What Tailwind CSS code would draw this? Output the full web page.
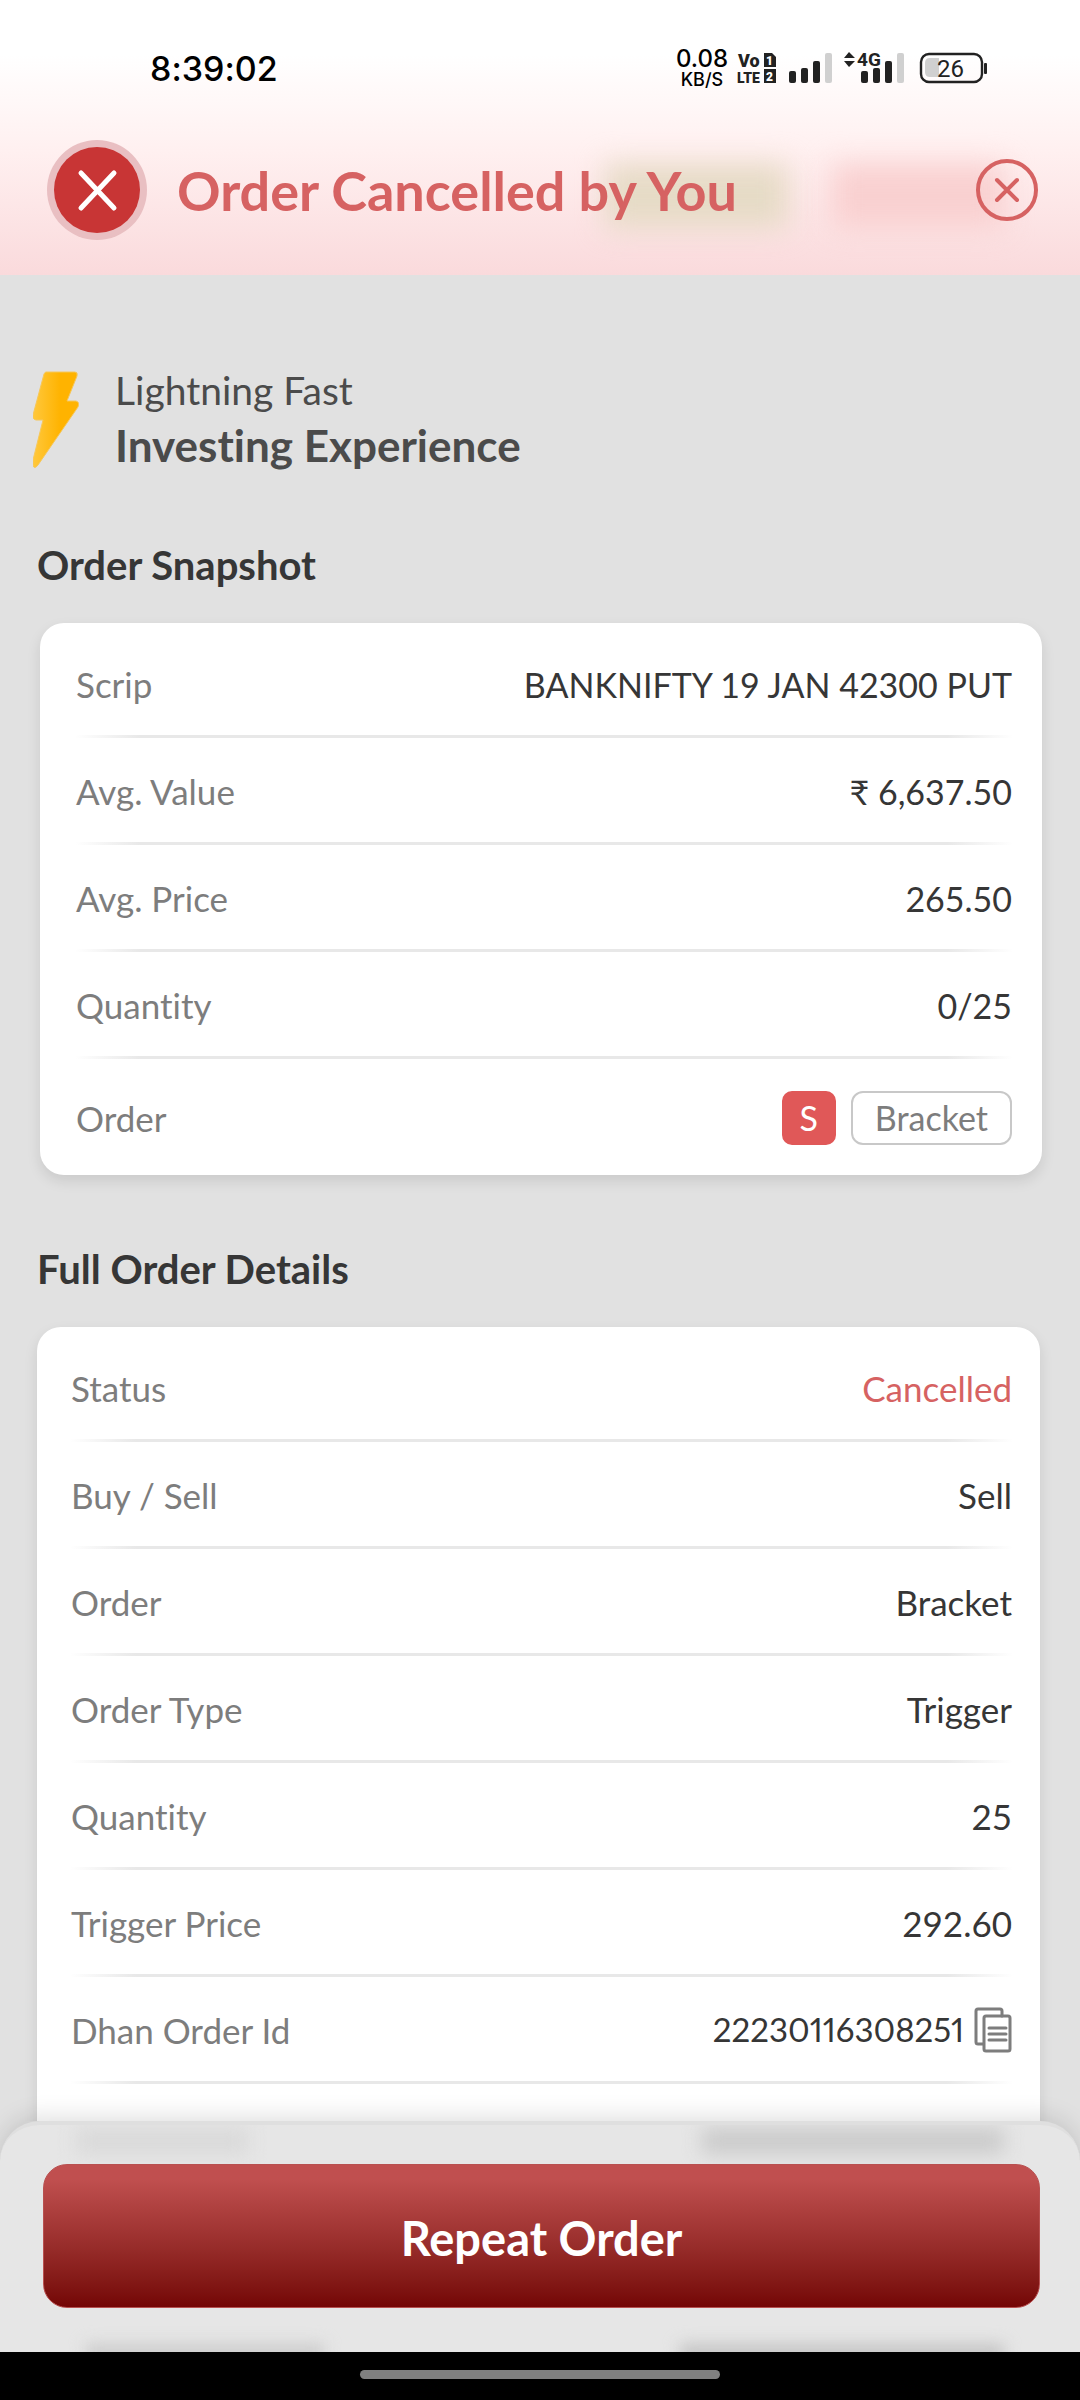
<!DOCTYPE html>
<html lang="en">
<head>
  <meta charset="UTF-8" />
  <meta name="viewport" content="width=device-width, initial-scale=1.0" />
  <title>Order Cancelled</title>
  <script src="https://cdn.jsdelivr.net/npm/@tailwindcss/browser@4"></script>
  <style>
    body {
      font-variant-ligatures: none;
    }
    .rows > div {
      border-bottom: 3px solid;
      border-image: linear-gradient(to right, #fff, #e8e8e8 7%, #e8e8e8 93%, #fff) 1;
    }
    .rows > div:last-child {
      border: 0;
    }
  </style>
</head>
<body class="flex h-screen flex-col overflow-hidden bg-[#e1e1e1] font-['Lato',sans-serif] text-[#363636]">
  <!-- Header -->
  <header class="relative h-[275px] shrink-0 overflow-hidden bg-linear-to-b from-white from-20% via-[#fff0f0] via-55% to-[#fadadc]">
    <div class="absolute top-[164px] left-[56%] h-[64px] w-[17%] bg-[#e6dbc6] blur-[14px]"></div>
    <div class="absolute top-[164px] left-[77%] h-[64px] w-[16%] bg-[#f9d0d0] blur-[14px]"></div>

    <!-- Status bar -->
    <div class="relative flex h-[136px] items-center justify-between pr-[92px] pl-[150px] font-['Inter',sans-serif] text-black">
      <span class="text-[34px] font-medium">8:39:02</span>
      <div class="flex items-center">
        <div class="mr-2 text-center leading-none font-medium">
          <div class="text-[24px]">0.08</div>
          <div class="text-[18px]">KB/S</div>
        </div>
        <svg class="h-10 w-[252px]" viewBox="736 48 252 40" fill="#222" font-family="Roboto, sans-serif" font-weight="900">
          <text x="738" y="67" font-size="18">Vo</text>
          <text x="737" y="83" font-size="14">LTE</text>
          <path d="M764 53h8l4 4v10h-12zM764 69h12v14h-12z" />
          <text x="766" y="65" font-size="12" fill="#fff">1</text>
          <text x="766" y="81" font-size="12" fill="#fff">2</text>
          <rect x="789" y="71" width="7" height="12" rx="2" />
          <rect x="801" y="68" width="7" height="15" rx="2" />
          <rect x="813" y="61" width="7" height="22" rx="2" />
          <rect x="825" y="53" width="7" height="30" rx="2" fill="#d0d0d0" />
          <path d="M844 58l5-6 6 6zM844 61h11l-6 6z" />
          <text x="857" y="66" font-size="19" font-weight="700">4G</text>
          <rect x="861" y="71" width="7" height="12" rx="2" />
          <rect x="873" y="68" width="7" height="15" rx="2" />
          <rect x="885" y="61" width="7" height="22" rx="2" />
          <rect x="897" y="53" width="7" height="30" rx="2" fill="#d0d0d0" />
          <rect x="921" y="54" width="61" height="28" rx="8" fill="none" stroke="#222" stroke-width="2.4" />
          <path d="M939 58v19h-9q-5 0-5-5v-9q0-5 5-5z" fill="#d0d0d0" />
          <rect x="984" y="63" width="3" height="11" rx="1" />
          <text x="937" y="77" font-size="24" font-weight="400">26</text>
        </svg>
      </div>
    </div>

    <!-- Title -->
    <div class="relative flex h-[108px] items-center pr-[41px] pl-[47px] text-[#d66262]">
      <svg class="h-[100px] w-[100px]" viewBox="0 0 100 100" fill="none">
        <circle cx="50" cy="50" r="50" fill="#e9bfc2" />
        <circle cx="50" cy="50" r="43" fill="#c83535" />
        <path d="M34 33l33 35M67 33L34 68" stroke="#fff" stroke-width="5" stroke-linecap="round" />
      </svg>
      <h1 class="ml-[30px] flex-1 text-[54px] font-bold">Order Cancelled by You</h1>
      <button type="button" aria-label="Close">
        <svg class="h-16 w-16" viewBox="0 0 64 64" fill="none" stroke="#d66262" stroke-width="4" stroke-linecap="round">
          <circle cx="32" cy="32" r="29" />
          <path d="M22 22l20 20M42 22L22 42" />
        </svg>
      </button>
    </div>
  </header>

  <main class="min-h-0 flex-1 overflow-hidden pr-[40px] pl-[37px]">
    <div class="-ml-1 flex gap-[36px] pt-[88px] text-[#4b4b4b]">
      <svg class="mt-2 h-[98px] w-[46px]" viewBox="0 0 46 98">
        <defs>
          <linearGradient id="bolt" x1="0" x2="1" y1="0" y2="0">
            <stop offset="0" stop-color="#ffc83d" />
            <stop offset=".6" stop-color="#ffb300" />
          </linearGradient>
        </defs>
        <path d="M13 1h29q3 0 2 4L34 30h9q4 1 2 6L5 94q-4 5-5 0v-5l10-40H3q-4-1-3-5L11 3q1-2 2-2z" fill="url(#bolt)" stroke="#f6c75a" />
      </svg>
      <div>
        <p class="text-[39px] leading-[54px]">Lightning Fast</p>
        <p class="text-[44px] leading-[56px] font-bold">Investing Experience</p>
      </div>
    </div>

    <h2 class="mt-[64px] text-[40px] leading-[56px] font-bold">Order Snapshot</h2>
    <dl class="rows mt-[30px] -mr-[2px] ml-[3px] rounded-[24px] bg-white pt-2 pr-[30px] pl-[36px] text-[35px] shadow-[0_6px_14px_rgba(0,0,0,0.1)] [&_dd]:text-[34px] [&_dt]:text-[#7d7d7d] [&>div]:flex [&>div]:h-[107px] [&>div]:items-center [&>div]:justify-between [&>div]:pt-[2px] [&>div:last-child]:h-[116px]">
      <div><dt>Scrip</dt><dd>BANKNIFTY 19 JAN 42300 PUT</dd></div>
      <div><dt>Avg. Value</dt><dd>₹ 6,637.50</dd></div>
      <div><dt>Avg. Price</dt><dd>265.50</dd></div>
      <div><dt>Quantity</dt><dd>0/25</dd></div>
      <div>
        <dt>Order</dt>
        <dd class="flex gap-[15px] leading-[50px]">
          <span class="w-[54px] rounded-[10px] border-2 border-[#e05858] bg-[#e05858] text-center text-white">S</span>
          <span class="rounded-[12px] border-2 border-[#c8c8c8] px-[22px] text-[#7d7d7d]">Bracket</span>
        </dd>
      </div>
    </dl>

    <h2 class="mt-[66px] text-[40px] leading-[56px] font-bold">Full Order Details</h2>
    <dl class="rows mt-[30px] rounded-t-[24px] bg-white pt-2 pr-[28px] pl-[34px] text-[35px] shadow-[0_6px_14px_rgba(0,0,0,0.1)] [&_dt]:text-[#7d7d7d] [&>div]:flex [&>div]:h-[107px] [&>div]:items-center [&>div]:justify-between [&>div]:pt-[2px]">
      <div><dt>Status</dt><dd class="text-[#d66262]">Cancelled</dd></div>
      <div><dt>Buy / Sell</dt><dd>Sell</dd></div>
      <div><dt>Order</dt><dd>Bracket</dd></div>
      <div><dt>Order Type</dt><dd>Trigger</dd></div>
      <div><dt>Quantity</dt><dd>25</dd></div>
      <div><dt>Trigger Price</dt><dd>292.60</dd></div>
      <div>
        <dt>Dhan Order Id</dt>
        <dd class="flex items-center gap-[10px] text-[33px] proportional-nums">
          22230116308251
          <button type="button" aria-label="Copy order id">
            <svg class="h-[46px] w-[38px]" viewBox="0 0 38 46" fill="none" stroke="#7d7d7d" stroke-width="3" stroke-linecap="round">
              <path d="M9 37H4q-2 0-2-2V4q0-2 2-2h22q2 0 2 2v5" />
              <rect x="10" y="9" width="26" height="35" rx="2" />
              <path d="M15 21h17M15 27h17M15 33h17" />
            </svg>
          </button>
        </dd>
      </div>
      <div></div>
    </dl>
  </main>

  <!-- Bottom action -->
  <footer class="relative shrink-0">
    <div class="relative h-[231px] overflow-hidden rounded-t-[40px] border-t-4 border-[#dfdfdf] bg-[#e6e6e6] pt-[39px] pr-10 pl-[43px] shadow-[0_-4px_24px_rgba(0,0,0,0.13)]">
      <div class="absolute top-1 left-[7%] h-6 w-[16%] bg-[#d8d8d8] blur-[10px]"></div>
      <div class="absolute top-1 right-[7%] h-6 w-[28%] bg-[#c8c8c8] blur-[10px]"></div>
      <div class="absolute -bottom-3 left-[8%] h-5 w-[22%] bg-[#cccccc] blur-[8px]"></div>
      <div class="absolute right-[7%] -bottom-3 h-5 w-[30%] bg-[#c4c4c4] blur-[8px]"></div>
      <button type="button" class="relative h-36 w-full rounded-[24px] border border-[#b85050] bg-linear-to-b from-[#c04f4f] from-10% to-[#740505] pt-1 text-[47px] font-bold text-white">Repeat Order</button>
    </div>
    <div class="flex h-12 items-center justify-center bg-black pb-[3px]">
      <div class="h-[9px] w-1/3 rounded-full bg-[#808080]"></div>
    </div>
  </footer>
</body>
</html>
